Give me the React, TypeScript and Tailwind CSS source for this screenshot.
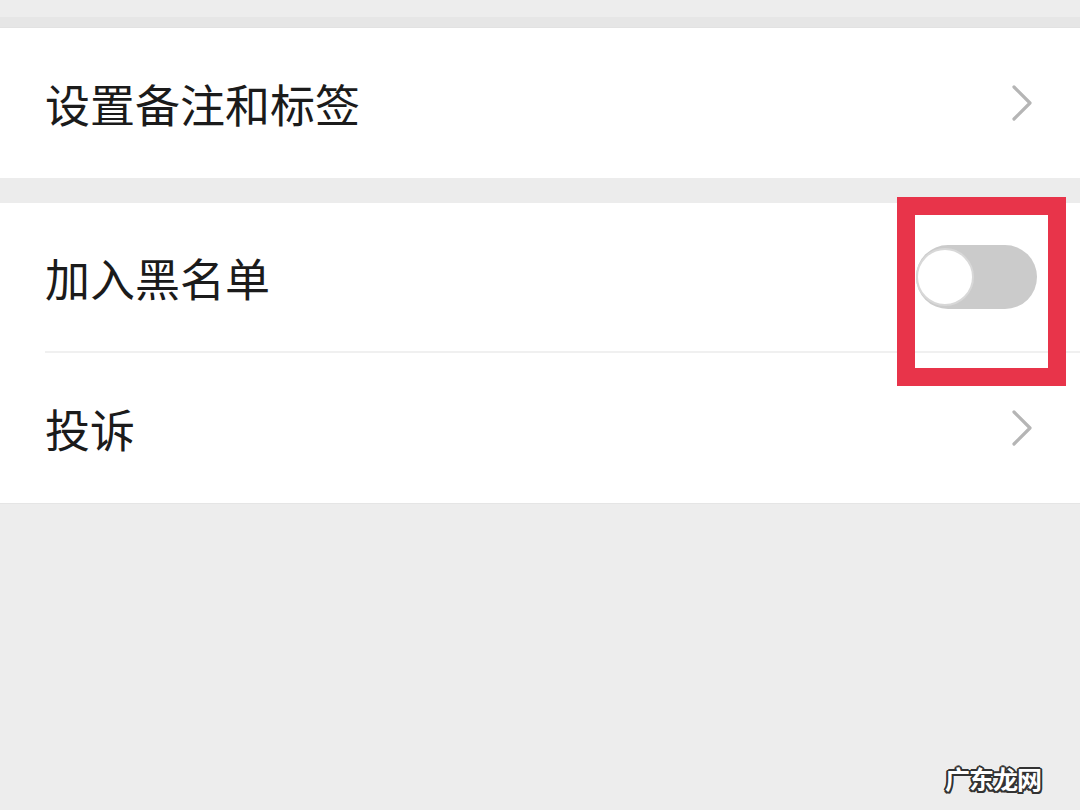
import React from "react";

const font = { fontFamily: '"Noto Sans CJK SC", "Noto Sans", sans-serif' };

function Chevron() {
    return (
        <svg width="24" height="40" viewBox="0 0 24 40" className="shrink-0">
            <path d="M4 4 L20 20 L4 36" fill="none" stroke="#b5b5b5" strokeWidth="3.2" strokeLinecap="round" strokeLinejoin="round" />
        </svg>
    );
}

function Row({ label, right, divider }: { label: string; right: React.ReactNode; divider?: boolean }) {
    return (
        <div className="pl-[45px]">
            <div className={`h-[150px] flex items-center justify-between pr-[46px] ${divider ? "border-b-2 border-[#f0f0f0]" : ""}`}>
                <span className="text-[45px] leading-none text-[#1b1b1b]" style={font}>{label}</span>
                {right}
            </div>
        </div>
    );
}

function Toggle() {
    return (
        <div className="flex items-center w-[121px] h-[64px] rounded-full bg-[#cbcbcb] -mr-[3px]">
            <div className="w-[58px] h-[58px] rounded-full bg-white border-[2px] border-[#d8d8d8]" />
        </div>
    );
}

export default function App() {
    return (
        <div className="w-[1080px] h-[810px] bg-[#ededed] overflow-hidden relative flex flex-col">
            <div className="h-[17px]" />
            <div className="h-[11px] bg-[#e6e6e6] border-b border-[#e2e2e2]" />

            <div className="bg-white">
                <Row label="设置备注和标签" right={<Chevron />} />
            </div>

            <div className="h-[25px] bg-[#ececec]" />

            <div className="bg-white border-b border-[#e5e5e5]">
                <Row label="加入黑名单" right={<Toggle />} divider />
                <Row label="投诉" right={<Chevron />} />
            </div>

            {/* red annotation box */}
            <div className="absolute left-[897px] top-[197px] w-[169px] h-[189px] border-[18px] border-[#e8344a]" />

            {/* watermark */}
            <div
                className="absolute left-[945px] top-[766px] text-[25px] leading-none font-bold text-white tracking-[-1px] [text-shadow:2px_0_#333,-2px_0_#333,0_2px_#333,0_-2px_#333,1.5px_1.5px_#333,-1.5px_-1.5px_#333,1.5px_-1.5px_#333,-1.5px_1.5px_#333]"
                style={font}
            >
                广东龙网
            </div>
        </div>
    );
}
